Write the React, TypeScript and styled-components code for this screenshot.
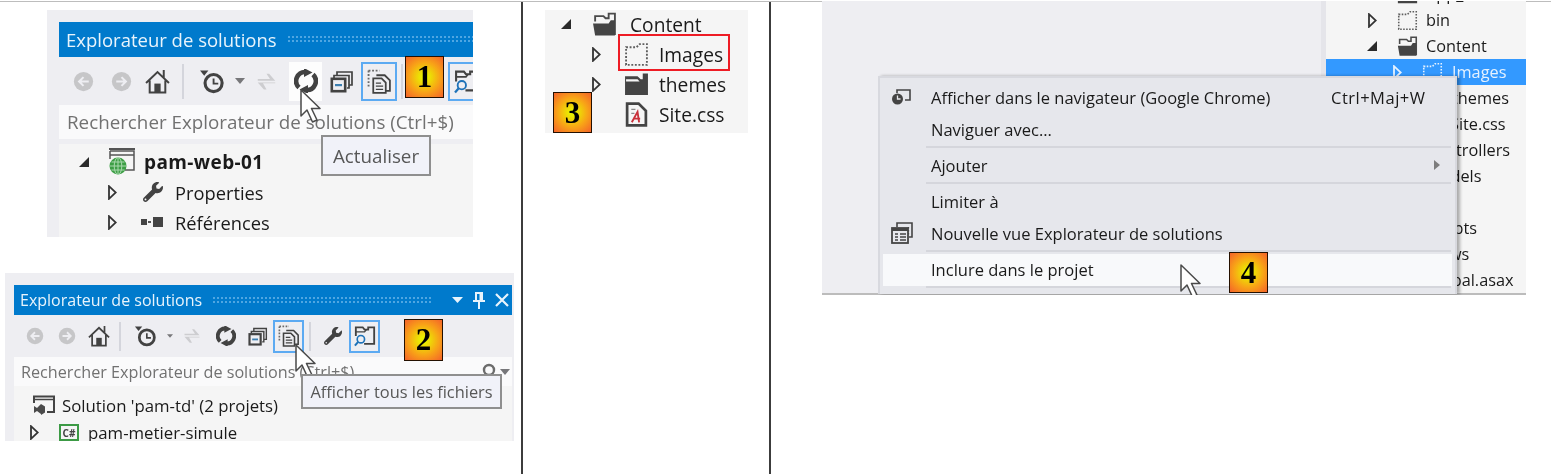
import React from 'react';
import styled, { createGlobalStyle } from 'styled-components';
import { FaWrench } from 'react-icons/fa';

const GlobalStyle = createGlobalStyle`
    html, body {
        margin: 0;
        padding: 0;
        background: #fff;
        overflow: hidden;
    }
    * {
        box-sizing: border-box;
    }
`;

const UI_FONT = `'Open Sans', 'Noto Sans', sans-serif`;

const Page = styled.div`
    display: grid;
    grid-template-columns: 523px 248px 1fr;
    width: 1551px;
    height: 474px;
    margin-top: 1px;
    border-top: 1px solid #bdbdbd;
    font-family: ${UI_FONT};
    color: #1a1a1a;
`;

const Column = styled.div<{ $divider?: boolean }>`
    display: flex;
    flex-direction: column;
    border-right: ${(p) => (p.$divider ? '2px solid #3c3c3c' : 'none')};
`;

const Shot = styled.div<{ $w: number; $h: number; $top: number; $left: number; $pad?: string; $bg?: string }>`
    position: relative;
    flex: none;
    overflow: hidden;
    width: ${(p) => p.$w}px;
    height: ${(p) => p.$h}px;
    margin: ${(p) => p.$top}px 0 0 ${(p) => p.$left}px;
    padding: ${(p) => p.$pad || '0'};
    background: ${(p) => p.$bg || '#eeeef2'};
    filter: blur(0.35px);
`;

const TitleBar = styled.div<{ $h: number; $size: number; $pad: number }>`
    display: flex;
    align-items: center;
    gap: 10px;
    height: ${(p) => p.$h}px;
    padding-left: ${(p) => p.$pad}px;
    background: #007acc;
    color: #e8f4fc;
    font-size: ${(p) => p.$size}px;
    white-space: nowrap;
`;

const Grip = styled.div`
    flex: 1;
    height: 9px;
    background-image: radial-gradient(#4fa6e2 0.9px, transparent 1px);
    background-size: 4px 4px;
`;

const TitleButtons = styled.div`
    display: flex;
    align-items: center;
    gap: 9px;
    padding: 0 3px 0 10px;
`;

const Toolbar = styled.div<{ $h: number; $pad: number }>`
    display: flex;
    align-items: center;
    height: ${(p) => p.$h}px;
    padding-left: ${(p) => p.$pad}px;
`;

const ToolSlot = styled.div<{ $w: number; $boxH: number; $active?: boolean; $hot?: boolean }>`
    display: flex;
    flex: none;
    align-items: center;
    justify-content: center;
    width: ${(p) => p.$w}px;
    height: ${(p) => p.$boxH}px;
    border: 2px solid ${(p) => (p.$active ? '#5caaf2' : 'transparent')};
    background: ${(p) => (p.$hot ? '#fdfdfd' : 'transparent')};
`;

const ToolSeparator = styled.div<{ $w: number; $boxH: number }>`
    flex: none;
    width: ${(p) => p.$w}px;
    height: ${(p) => p.$boxH}px;
    background: linear-gradient(#d4d5dc, #d4d5dc) center / 2px 100% no-repeat;
`;

const SearchBox = styled.div<{ $h: number; $size: number; $pad: number }>`
    display: flex;
    align-items: center;
    justify-content: space-between;
    height: ${(p) => p.$h}px;
    padding: 0 2px 0 ${(p) => p.$pad}px;
    background: #fafafb;
    color: #717171;
    font-size: ${(p) => p.$size}px;
    white-space: nowrap;
`;

const SearchTail = styled.div`
    display: flex;
    align-items: center;
    gap: 3px;
`;

const Tree = styled.div<{ $top?: number; $pad?: number }>`
    margin-top: ${(p) => p.$top || 0}px;
    padding-top: ${(p) => p.$pad || 0}px;
    height: 100%;
    background: #f5f5f5;
`;

const Row = styled.div<{ $h: number; $indent: number; $size: number; $selected?: boolean; $bold?: boolean }>`
    display: flex;
    align-items: center;
    height: ${(p) => p.$h}px;
    padding-left: ${(p) => p.$indent}px;
    font-size: ${(p) => p.$size}px;
    font-weight: ${(p) => (p.$bold ? 700 : 400)};
    letter-spacing: ${(p) => (p.$bold ? '0.4px' : '0')};
    white-space: nowrap;
    background: ${(p) => (p.$selected ? '#3399ff' : 'transparent')};
    color: ${(p) => (p.$selected ? '#e6f2ff' : 'inherit')};
`;

const Twisty = styled.span<{ $w: number }>`
    display: flex;
    flex: none;
    align-items: center;
    width: ${(p) => p.$w}px;
`;

const RowIcon = styled.span<{ $w: number }>`
    display: flex;
    flex: none;
    align-items: center;
    width: ${(p) => p.$w}px;
`;

const Tip = styled.div<{ $x: number; $y: number; $w: number; $h: number; $size: number }>`
    position: absolute;
    left: ${(p) => p.$x}px;
    top: ${(p) => p.$y}px;
    display: flex;
    align-items: center;
    justify-content: center;
    width: ${(p) => p.$w}px;
    height: ${(p) => p.$h}px;
    border: 2px solid #8f8f8f;
    background: #f1f2f9;
    color: #575757;
    font-size: ${(p) => p.$size}px;
    white-space: nowrap;
`;

const Badge = styled.div<{ $x: number; $y: number; $h: number }>`
    position: absolute;
    left: ${(p) => p.$x}px;
    top: ${(p) => p.$y}px;
    display: flex;
    align-items: center;
    justify-content: center;
    width: 39px;
    height: ${(p) => p.$h}px;
    border: 1px solid #241000;
    background: radial-gradient(circle, #e9ee00 12%, #f8a516 55%, #f4622a 100%);
    color: #000;
    font-family: 'Liberation Serif', serif;
    font-size: 31px;
    font-weight: 700;
`;

const Cursor = styled.svg<{ $x: number; $y: number }>`
    position: absolute;
    left: ${(p) => p.$x}px;
    top: ${(p) => p.$y}px;
`;

const RedFrame = styled.div`
    position: absolute;
    left: 73px;
    top: 24px;
    width: 112px;
    height: 37px;
    border: 2px solid #ee1c25;
`;

const Desk = styled.div`
    display: flex;
    height: 100%;
    border-bottom: 2px solid #bcbcbc;
`;

const DeskLeft = styled.div`
    flex: 1;
    border-right: 5px solid #e5e5ea;
`;

const DeskTree = styled.div`
    flex: none;
    overflow: hidden;
    width: 200px;
    background: #f5f5f5;

    & > :first-child {
        margin-top: -20px;
    }
`;

const Menu = styled.div`
    position: absolute;
    left: 56px;
    top: 75px;
    width: 579px;
    height: 218px;
    padding-top: 4px;
    border: 2px solid #d8d9df;
    border-bottom: none;
    background: #e6e7ec;
    box-shadow: 3px 0 3px rgba(0, 0, 0, 0.3);
`;

const MenuItem = styled.div<{ $hot?: boolean }>`
    display: grid;
    grid-template-columns: 48px 400px 1fr 24px;
    align-items: center;
    height: 32px;
    margin: 0 3px;
    padding-bottom: 2px;
    font-size: 16.5px;
    white-space: nowrap;
    background: ${(p) => (p.$hot ? '#f8f9fb' : 'transparent')};
`;

const MenuGlyph = styled.span`
    display: flex;
    align-items: center;
    padding-left: 8px;
`;

const MenuKey = styled.span`
    letter-spacing: 0.5px;
`;

const MenuSeparator = styled.div`
    height: 2px;
    margin: 0 4px 2px 46px;
    background: #d5d6dc;
`;

const MenuArrow = styled.span`
    width: 0;
    height: 0;
    margin-left: 6px;
    border-left: 6px solid #7d7d7d;
    border-top: 5px solid transparent;
    border-bottom: 5px solid transparent;
`;

const DARK = '#424242';

/* ---- toolbar drawings ---- */
const NavIcon = ({ s, flip }: { s: number; flip?: boolean }) => (
    <svg width={s} height={s} viewBox="0 0 24 24" style={flip ? { transform: 'scaleX(-1)' } : undefined}>
        <circle cx="12" cy="12" r="11" fill="#c6c6c8" />
        <path d="M18 12H8M12 7l-5 5 5 5" fill="none" stroke="#eeeef2" strokeWidth="2.4" />
    </svg>
);

const HomeIcon = ({ s }: { s: number }) => (
    <svg width={s} height={s} viewBox="0 0 24 24">
        <path d="M1 13.500L12 3 23 13.500M4.500 11V22.500H19.500V11M18 1V8.500" fill="none" stroke={DARK} strokeWidth="1.9" />
        <rect x="9" y="14" width="6" height="8.500" fill={DARK} />
    </svg>
);

const HistoryIcon = ({ s }: { s: number }) => (
    <svg width={s} height={s} viewBox="0 0 24 24">
        <path d="M1 1.500h8l-4 5z" fill={DARK} />
        <circle cx="14" cy="13.500" r="8.200" fill="none" stroke={DARK} strokeWidth="3" />
        <path d="M14 9v5h4.500" fill="none" stroke={DARK} strokeWidth="1.800" />
    </svg>
);

const DropIcon = () => (
    <svg width="10" height="6" viewBox="0 0 10 6">
        <path d="M0 0h10L5 6z" fill="#77777a" />
    </svg>
);

const SyncIcon = ({ s }: { s: number }) => (
    <svg width={s} height={s} viewBox="0 0 24 24">
        <path d="M2 9h14l-4-6h3l7 8H2zM22 14H8l4 7H9l-7-8h20z" fill="#cdcdd0" />
    </svg>
);

const RefreshIcon = ({ s }: { s: number }) => (
    <svg width={s} height={s} viewBox="0 0 24 24">
        <path d="M5 18.500A9 9 0 0 1 12 3M19 5.500A9 9 0 0 1 12 21" fill="none" stroke={DARK} strokeWidth="4.600" />
        <path d="M10 -1l8.500 4.500L10 8zM14 25l-8.500-4.500L14 16z" fill={DARK} />
    </svg>
);

const CollapseIcon = ({ s }: { s: number }) => (
    <svg width={s} height={s} viewBox="0 0 24 24">
        <path d="M7 6V3h15v13h-3M4 9V6.500h15V19h-2" fill="none" stroke={DARK} strokeWidth="1.700" />
        <rect x="1.800" y="9.800" width="13.400" height="12.400" fill="#eeeef2" stroke={DARK} strokeWidth="2.600" />
        <rect x="5" y="15" width="7" height="2.200" fill="#3c7fb1" />
    </svg>
);

const ShowAllIcon = ({ s }: { s: number }) => (
    <svg width={s} height={s} viewBox="0 0 24 24">
        <path d="M1.500 1.500H12M1.500 1.500V18" fill="none" stroke="#6a6a6a" strokeWidth="1.800" strokeDasharray="1.800 1.600" />
        <path d="M9 6h8l5 5v10h-4" fill="none" stroke={DARK} strokeWidth="1.700" />
        <path d="M6 9h8l4 4v10H6z" fill="#eeeef2" stroke={DARK} strokeWidth="1.700" />
        <path d="M8.500 13.500h5M8.500 16.500h7M8.500 19.500h7" stroke={DARK} strokeWidth="1.300" />
    </svg>
);

const PreviewIcon = ({ s }: { s: number }) => (
    <svg width={s} height={s} viewBox="0 0 24 24">
        <path d="M2 12V2.500h7.500l2 2.500h4V2.500H22v18H11" fill="none" stroke={DARK} strokeWidth="2" />
        <path d="M2 7.500h9.500l2-2.500" fill="none" stroke={DARK} strokeWidth="1.600" />
        <circle cx="7.500" cy="15.500" r="4" fill="none" stroke="#1e72b8" strokeWidth="1.800" />
        <path d="M4.500 18.500L1 22.500" stroke="#1e72b8" strokeWidth="2.200" />
    </svg>
);

/* ---- tree drawings ---- */
const Solid = () => (
    <svg width="12" height="12" viewBox="0 0 12 12">
        <path d="M11 1v10H1z" fill="#2a2a2a" />
    </svg>
);

const Hollow = ({ color = '#333' }: { color?: string }) => (
    <svg width="9" height="15" viewBox="0 0 9 15">
        <path d="M1 1.200v12.600L7.800 7.500z" fill="none" stroke={color} strokeWidth="1.800" />
    </svg>
);

const WebProjectIcon = () => (
    <svg width="27" height="27" viewBox="0 0 27 27">
        <path d="M1 1h26" stroke="#555" strokeWidth="2" />
        <path d="M2 3h24v19H17" fill="none" stroke="#555" strokeWidth="1.500" />
        <path d="M2 3v8M2 7h24" fill="none" stroke="#555" strokeWidth="1.500" />
        <circle cx="10" cy="18" r="8.500" fill="#3d9e45" />
        <path d="M10 9.500v17M1.500 18h17M3.500 14h13M3.500 22h13" stroke="#a9d8ad" strokeWidth="1" />
        <ellipse cx="10" cy="18" rx="3.800" ry="8.500" fill="none" stroke="#a9d8ad" strokeWidth="1" />
    </svg>
);

const ReferencesIcon = () => (
    <svg width="24" height="12" viewBox="0 0 24 12">
        <rect x="0" y="3" width="6" height="6" fill="#444" />
        <rect x="7" y="5" width="3" height="2" fill="#555" />
        <rect x="12" y="1" width="10" height="10" fill="#444" />
    </svg>
);

const OpenFolderIcon = ({ s }: { s: number }) => (
    <svg width={s} height={s} viewBox="0 0 24 24">
        <path d="M3 9V4h8l2 2h3V1.500h6V22" fill="none" stroke="#4a4a4a" strokeWidth="1.800" />
        <path d="M1 11h15l2-3h4v14.500H3z" fill="#444" />
    </svg>
);

const ClosedFolderIcon = ({ s }: { s: number }) => (
    <svg width={s} height={s} viewBox="0 0 24 24">
        <path d="M1 4h12l3 3h2V1.500h5V22H1z" fill="#444" />
        <path d="M2 7h11l2 2H2z" fill="#f5f5f5" />
    </svg>
);

const DottedFolderIcon = ({ s, color = '#5e5e5e' }: { s: number; color?: string }) => (
    <svg width={s} height={s} viewBox="0 0 24 24">
        <path d="M2 5h10l3-3h7v20H2z" fill="none" stroke={color} strokeWidth="1.800" strokeDasharray="1.800 1.600" />
    </svg>
);

const CssFileIcon = ({ s }: { s: number }) => (
    <svg width={s} height={s} viewBox="0 0 24 24">
        <path d="M3 1.500h11l7 7V22.500H3z" fill="#f5f5f5" stroke="#444" strokeWidth="2.600" />
        <path d="M7 7h4M7 11h3" stroke="#8a8a8a" strokeWidth="1.200" />
        <path d="M7.500 19.500L13 9.500l1.500 10M9.500 16h6" fill="none" stroke="#c9303a" strokeWidth="1.800" />
    </svg>
);

const SolutionIcon = () => (
    <svg width="22" height="21" viewBox="0 0 22 21">
        <path d="M1 8V1.500h20V17h-7" fill="none" stroke="#444" strokeWidth="2" />
        <path d="M1 4.500h20" stroke="#444" strokeWidth="1.500" />
        <path d="M1 11v7l3-2 4 3V9L4 13z" fill="#4a4a4a" />
        <path d="M8 9l4 2.500v6L8 20z" fill="#4a4a4a" />
    </svg>
);

const CSharpBox = styled.span`
    display: flex;
    align-items: center;
    justify-content: center;
    width: 20px;
    height: 17px;
    border: 2px solid #3c9a45;
    color: #444;
    font-size: 10px;
    font-weight: 700;
`;

const BrowserIcon = () => (
    <svg width="20" height="16" viewBox="0 0 20 16">
        <path d="M6 4V1h13v10h-5" fill="none" stroke="#444" strokeWidth="1.600" />
        <circle cx="6.500" cy="10" r="5.500" fill="#444" />
        <path d="M6.500 6.500V10h3" fill="none" stroke="#e6e7ec" strokeWidth="1.300" />
    </svg>
);

const NewViewIcon = () => (
    <svg width="22" height="22" viewBox="0 0 22 22">
        <path d="M6 5V1h15v14h-3" fill="none" stroke="#444" strokeWidth="1.600" />
        <path d="M17.500 5v8" stroke="#444" strokeWidth="1.300" strokeDasharray="1.500 1.500" />
        <rect x="1" y="6" width="16" height="15" fill="#e6e7ec" stroke="#444" strokeWidth="1.800" />
        <rect x="1" y="6" width="16" height="3" fill="#444" />
        <path d="M4 12h3M9 12h6M4 15h3M9 15h6M4 18h3M9 18h6" stroke="#444" strokeWidth="1.400" />
    </svg>
);

const PointerIcon = ({ x, y }: { x: number; y: number }) => (
    <Cursor $x={x} $y={y} width="24" height="34" viewBox="0 0 24 34">
        <path
            d="M2 1v26l6-6 5.500 12 4.500-2-5.500-11.500H21z"
            fill="#fff"
            stroke="#4a4a4a"
            strokeWidth="1.500"
            strokeLinejoin="round"
        />
    </Cursor>
);

/* ---- data ---- */
type Tool = { key: string; w: number; icon?: React.ReactNode; sep?: boolean; active?: boolean; hot?: boolean };

const bigTools: Tool[] = [
    { key: 'back', w: 38, icon: <NavIcon s={21} /> },
    { key: 'fwd', w: 38, icon: <NavIcon s={21} flip /> },
    { key: 'home', w: 34, icon: <HomeIcon s={25} /> },
    { key: 's1', w: 17, sep: true },
    { key: 'hist', w: 41, icon: <HistoryIcon s={25} /> },
    { key: 'drop', w: 15, icon: <DropIcon /> },
    { key: 'sync', w: 38, icon: <SyncIcon s={21} /> },
    { key: 'gap', w: 2 },
    { key: 'refresh', w: 33, icon: <RefreshIcon s={24} />, hot: true },
    { key: 'collapse', w: 39, icon: <CollapseIcon s={24} /> },
    { key: 'all', w: 36, icon: <ShowAllIcon s={25} />, active: true },
    { key: 's2', w: 10, sep: true },
    { key: 'wrench', w: 41 },
    { key: 'preview', w: 37, icon: <PreviewIcon s={25} />, active: true },
];

const smallTools: Tool[] = [
    { key: 'back', w: 32, icon: <NavIcon s={18} /> },
    { key: 'fwd', w: 32, icon: <NavIcon s={18} flip /> },
    { key: 'home', w: 32, icon: <HomeIcon s={22} /> },
    { key: 's1', w: 10, sep: true },
    { key: 'hist', w: 40, icon: <HistoryIcon s={22} /> },
    { key: 'drop', w: 10, icon: <DropIcon /> },
    { key: 'sync', w: 34, icon: <SyncIcon s={18} /> },
    { key: 'refresh', w: 33, icon: <RefreshIcon s={20} /> },
    { key: 'collapse', w: 31, icon: <CollapseIcon s={20} /> },
    { key: 'all', w: 31, icon: <ShowAllIcon s={22} />, active: true },
    { key: 's2', w: 12, sep: true },
    { key: 'wrench', w: 33, icon: <FaWrench size={18} color={DARK} /> },
    { key: 'preview', w: 31, icon: <PreviewIcon s={22} />, active: true },
];

const ToolRow = ({ tools, h, pad, boxH }: { tools: Tool[]; h: number; pad: number; boxH: number }) => (
    <Toolbar $h={h} $pad={pad}>
        {tools.map((t) =>
            t.sep ? (
                <ToolSeparator key={t.key} $w={t.w} $boxH={boxH - 4} />
            ) : (
                <ToolSlot key={t.key} $w={t.w} $boxH={boxH} $active={t.active} $hot={t.hot}>
                    {t.icon}
                </ToolSlot>
            )
        )}
    </Toolbar>
);

const App: React.FC = () => (
    <>
        <GlobalStyle />
        <Page>
            <Column $divider>
                <Shot $w={426} $h={227} $top={8} $left={47} $pad="12px 0 0 12px">
                    <TitleBar $h={35} $size={18.5} $pad={7}>
                        Explorateur de solutions
                        <Grip />
                    </TitleBar>
                    <ToolRow tools={bigTools} h={48} pad={5} boxH={39} />
                    <SearchBox $h={34} $size={18.8} $pad={8}>
                        Rechercher Explorateur de solutions (Ctrl+$)
                    </SearchBox>
                    <Tree $top={5} $pad={2}>
                        <Row $h={31} $indent={19} $size={19} $bold>
                            <Twisty $w={30}>
                                <Solid />
                            </Twisty>
                            <RowIcon $w={36}>
                                <WebProjectIcon />
                            </RowIcon>
                            pam-web-01
                        </Row>
                        <Row $h={30} $indent={49} $size={18.3}>
                            <Twisty $w={35}>
                                <Hollow />
                            </Twisty>
                            <RowIcon $w={32}>
                                <FaWrench size={20} color={DARK} />
                            </RowIcon>
                            Properties
                        </Row>
                        <Row $h={30} $indent={49} $size={18.3}>
                            <Twisty $w={33}>
                                <Hollow />
                            </Twisty>
                            <RowIcon $w={34}>
                                <ReferencesIcon />
                            </RowIcon>
                            Références
                        </Row>
                    </Tree>
                    <Badge $x={358} $y={46} $h={42}>
                        1
                    </Badge>
                    <PointerIcon x={252} y={79} />
                    <Tip $x={274} $y={125} $w={110} $h={41} $size={18.8}>
                        Actualiser
                    </Tip>
                </Shot>

                <Shot $w={509} $h={168} $top={36} $left={5} $pad="12px 2px 0 9px">
                    <TitleBar $h={30} $size={16} $pad={6}>
                        Explorateur de solutions
                        <Grip />
                        <TitleButtons>
                            <svg width="11" height="6" viewBox="0 0 11 6">
                                <path d="M0 0h11L5.500 6z" fill="#e8f4fc" />
                            </svg>
                            <svg width="14" height="18" viewBox="0 0 14 18">
                                <path d="M4 2h6v8H4zM1 10h12M7 10v8M8.500 2v8" fill="none" stroke="#e8f4fc" strokeWidth="2" />
                            </svg>
                            <svg width="14" height="14" viewBox="0 0 14 14">
                                <path d="M1 1l12 12M13 1L1 13" stroke="#e8f4fc" strokeWidth="2.200" />
                            </svg>
                        </TitleButtons>
                    </TitleBar>
                    <ToolRow tools={smallTools} h={42} pad={5} boxH={33} />
                    <SearchBox $h={29} $size={16.2} $pad={7}>
                        Rechercher Explorateur de solutions (Ctrl+$)
                        <SearchTail>
                            <svg width="16" height="18" viewBox="0 0 16 18">
                                <circle cx="8" cy="7" r="5" fill="none" stroke="#6c6c6c" strokeWidth="2.400" />
                                <path d="M8 12v6" stroke="#6c6c6c" strokeWidth="2.400" />
                            </svg>
                            <DropIcon />
                        </SearchTail>
                    </SearchBox>
                    <Tree $pad={6}>
                        <Row $h={27} $indent={19} $size={16.8}>
                            <RowIcon $w={29}>
                                <SolutionIcon />
                            </RowIcon>
                            Solution 'pam-td' (2 projets)
                        </Row>
                        <Row $h={27} $indent={16} $size={16.8}>
                            <Twisty $w={29}>
                                <Hollow />
                            </Twisty>
                            <RowIcon $w={29}>
                                <CSharpBox>C#</CSharpBox>
                            </RowIcon>
                            pam-metier-simule
                        </Row>
                    </Tree>
                    <Badge $x={399} $y={46} $h={42}>
                        2
                    </Badge>
                    <PointerIcon x={289} y={71} />
                    <Tip $x={296} $y={101} $w={201} $h={35} $size={16.4}>
                        Afficher tous les fichiers
                    </Tip>
                </Shot>
            </Column>

            <Column $divider>
                <Shot $w={203} $h={123} $top={8} $left={22} $bg="#f5f5f5">
                    <Tree $top={-1}>
                        <Row $h={30} $indent={15} $size={19.2}>
                            <Twisty $w={32}>
                                <Solid />
                            </Twisty>
                            <RowIcon $w={38}>
                                <OpenFolderIcon s={25} />
                            </RowIcon>
                            Content
                        </Row>
                        <Row $h={30} $indent={47} $size={19.2}>
                            <Twisty $w={32}>
                                <Hollow />
                            </Twisty>
                            <RowIcon $w={35}>
                                <DottedFolderIcon s={25} />
                            </RowIcon>
                            Images
                        </Row>
                        <Row $h={30} $indent={47} $size={19.2}>
                            <Twisty $w={32}>
                                <Hollow />
                            </Twisty>
                            <RowIcon $w={35}>
                                <ClosedFolderIcon s={25} />
                            </RowIcon>
                            themes
                        </Row>
                        <Row $h={30} $indent={79} $size={19.2}>
                            <RowIcon $w={35}>
                                <CssFileIcon s={25} />
                            </RowIcon>
                            Site.css
                        </Row>
                    </Tree>
                    <RedFrame />
                    <Badge $x={8} $y={82} $h={41}>
                        3
                    </Badge>
                </Shot>
            </Column>

            <Column>
                <Shot $w={704} $h={294} $top={-1} $left={51}>
                    <Desk>
                        <DeskLeft />
                        <DeskTree>
                            <Row $h={26} $indent={71} $size={16.3}>
                                <RowIcon $w={29}>
                                    <ClosedFolderIcon s={21} />
                                </RowIcon>
                                App_Data
                            </Row>
                            <Row $h={26} $indent={42} $size={16.3}>
                                <Twisty $w={29}>
                                    <Hollow />
                                </Twisty>
                                <RowIcon $w={29}>
                                    <DottedFolderIcon s={21} />
                                </RowIcon>
                                bin
                            </Row>
                            <Row $h={26} $indent={40} $size={16.3}>
                                <Twisty $w={31}>
                                    <Solid />
                                </Twisty>
                                <RowIcon $w={29}>
                                    <OpenFolderIcon s={21} />
                                </RowIcon>
                                Content
                            </Row>
                            <Row $h={26} $indent={67} $size={16.3} $selected>
                                <Twisty $w={29}>
                                    <Hollow color="#e6f2ff" />
                                </Twisty>
                                <RowIcon $w={30}>
                                    <DottedFolderIcon s={21} color="#e6f2ff" />
                                </RowIcon>
                                Images
                            </Row>
                            <Row $h={26} $indent={126} $size={16.3}>
                                themes
                            </Row>
                            <Row $h={26} $indent={124} $size={16.3}>
                                Site.css
                            </Row>
                            <Row $h={26} $indent={100} $size={16.3}>
                                Controllers
                            </Row>
                            <Row $h={26} $indent={100} $size={16.3}>
                                Models
                            </Row>
                            <Row $h={26} $indent={100} $size={16.3} />
                            <Row $h={26} $indent={100} $size={16.3}>
                                Scripts
                            </Row>
                            <Row $h={26} $indent={100} $size={16.3}>
                                Views
                            </Row>
                            <Row $h={26} $indent={100} $size={16.3}>
                                Global.asax
                            </Row>
                        </DeskTree>
                    </Desk>
                    <Menu>
                        <MenuItem>
                            <MenuGlyph>
                                <BrowserIcon />
                            </MenuGlyph>
                            <span>Afficher dans le navigateur (Google Chrome)</span>
                            <MenuKey>Ctrl+Maj+W</MenuKey>
                        </MenuItem>
                        <MenuItem>
                            <span />
                            <span>Naviguer avec...</span>
                        </MenuItem>
                        <MenuSeparator />
                        <MenuItem>
                            <span />
                            <span>Ajouter</span>
                            <span />
                            <MenuArrow />
                        </MenuItem>
                        <MenuSeparator />
                        <MenuItem>
                            <span />
                            <span>Limiter à</span>
                        </MenuItem>
                        <MenuItem>
                            <MenuGlyph>
                                <NewViewIcon />
                            </MenuGlyph>
                            <span>Nouvelle vue Explorateur de solutions</span>
                        </MenuItem>
                        <MenuSeparator />
                        <MenuItem $hot>
                            <span />
                            <span>Inclure dans le projet</span>
                        </MenuItem>
                        <MenuSeparator />
                    </Menu>
                    <Badge $x={407} $y={251} $h={41}>
                        4
                    </Badge>
                    <PointerIcon x={357} y={263} />
                </Shot>
            </Column>
        </Page>
    </>
);

export default App;
